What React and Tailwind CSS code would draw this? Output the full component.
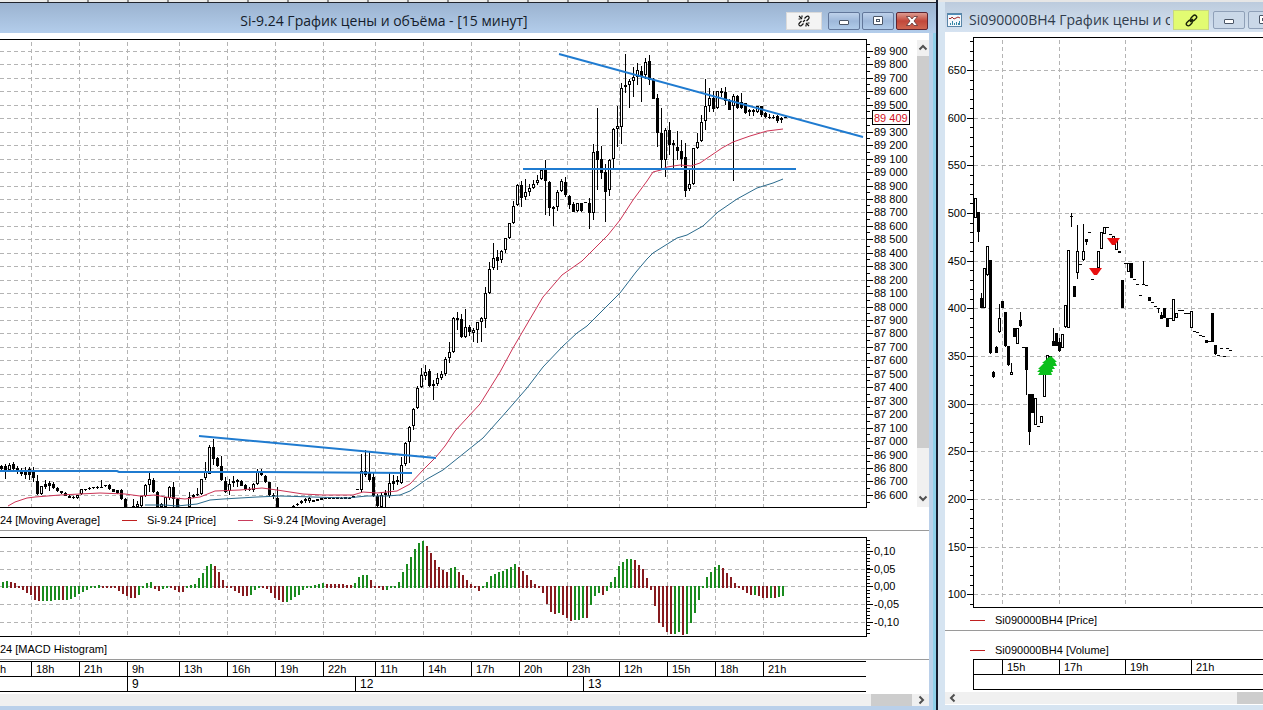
import React from 'react';

// Candles: [x, high, low, body top, body bottom, filled]
const PRICE_CANDLES = [
  [1, 465, 470, 466, 469, 1], [5, 464, 479, 466, 470, 1], [9, 463, 470, 465, 470, 0], [13, 462, 470, 464, 469, 1],
  [17, 466, 474, 468, 472, 1], [21, 468, 476, 471, 474, 1], [25, 467, 479, 470, 475, 1], [29, 467, 480, 469, 475, 1],
  [33, 467, 482, 470, 478, 1], [37, 475, 495, 481, 494, 1], [41, 486, 495, 486, 494, 0], [45, 480, 489, 484, 487, 1],
  [49, 481, 491, 483, 486, 1], [53, 482, 489, 484, 488, 1], [57, 487, 492, 488, 491, 1], [61, 491, 494, 491, 493, 1],
  [65, 492, 496, 493, 496, 1], [69, 495, 498, 496, 498, 1], [73, 496, 499, 497, 498, 1], [77, 495, 499, 495, 498, 0],
  [81, 489, 495, 489, 494, 0], [85, 489, 491, 489, 490, 1], [89, 487, 490, 488, 489, 1], [93, 487, 489, 487, 488, 1],
  [97, 486, 489, 487, 488, 1], [101, 480, 488, 487, 488, 1], [105, 485, 487, 485, 486, 1], [109, 484, 490, 485, 489, 1],
  [113, 489, 492, 489, 492, 1], [117, 490, 494, 490, 493, 1], [121, 489, 500, 490, 499, 1], [125, 498, 507, 499, 507, 1],
  [133, 499, 507, 506, 507, 0], [137, 501, 507, 504, 507, 0], [141, 496, 507, 496, 506, 0], [145, 484, 497, 485, 496, 0],
  [149, 473, 492, 479, 485, 0], [153, 478, 493, 480, 492, 1], [157, 491, 507, 492, 507, 1], [161, 503, 507, 504, 507, 0],
  [165, 497, 507, 497, 507, 0], [169, 486, 500, 487, 498, 0], [173, 482, 507, 487, 499, 1], [177, 498, 507, 499, 507, 1],
  [189, 492, 507, 497, 507, 0], [193, 494, 498, 495, 497, 1], [197, 488, 496, 494, 495, 1], [201, 479, 495, 479, 494, 0],
  [205, 462, 480, 472, 478, 0], [209, 445, 474, 447, 474, 0], [213, 439, 465, 447, 459, 1], [217, 457, 467, 458, 466, 1],
  [221, 456, 481, 466, 480, 1], [225, 477, 493, 481, 492, 1], [229, 479, 495, 484, 491, 0], [233, 476, 487, 481, 483, 0],
  [237, 479, 487, 480, 482, 0], [241, 480, 486, 481, 486, 1], [245, 484, 491, 485, 489, 1], [249, 487, 491, 489, 490, 1],
  [253, 483, 492, 484, 490, 0], [257, 469, 485, 471, 484, 0], [261, 469, 476, 471, 475, 1], [265, 475, 483, 476, 482, 1],
  [269, 482, 497, 482, 495, 1], [273, 493, 499, 495, 496, 1], [277, 487, 507, 498, 507, 1], [293, 505, 507, 506, 507, 1],
  [297, 503, 506, 504, 505, 1], [301, 500, 504, 501, 503, 0], [305, 498, 503, 499, 501, 1], [309, 497, 503, 498, 501, 0],
  [313, 500, 502, 500, 502, 1], [317, 499, 501, 499, 501, 1], [321, 498, 500, 498, 500, 1], [325, 497, 499, 498, 499, 1],
  [329, 497, 499, 497, 499, 1], [333, 497, 499, 498, 499, 1], [337, 497, 499, 497, 499, 1], [341, 497, 499, 498, 499, 1],
  [345, 497, 499, 497, 499, 1], [349, 497, 499, 498, 499, 1], [353, 496, 498, 496, 498, 1], [357, 489, 490, 489, 490, 1],
  [361, 454, 492, 471, 490, 0], [365, 450, 477, 471, 475, 1], [369, 452, 482, 472, 480, 1], [373, 473, 497, 477, 496, 1],
  [377, 494, 507, 496, 506, 1], [381, 493, 507, 495, 507, 0], [385, 490, 507, 493, 495, 1], [389, 473, 498, 483, 496, 0],
  [393, 475, 490, 481, 484, 1], [397, 476, 485, 480, 482, 1], [401, 457, 484, 465, 483, 0], [405, 442, 466, 443, 464, 0],
  [409, 426, 463, 427, 442, 0], [413, 408, 430, 409, 426, 0], [417, 386, 409, 388, 408, 0], [421, 368, 388, 375, 387, 0],
  [425, 365, 380, 372, 376, 0], [429, 369, 387, 371, 386, 1], [433, 380, 400, 384, 386, 1], [437, 373, 386, 378, 384, 0],
  [441, 371, 380, 374, 378, 0], [445, 357, 376, 359, 374, 0], [449, 342, 363, 352, 358, 0], [453, 317, 353, 318, 352, 0],
  [457, 312, 330, 318, 320, 1], [461, 314, 338, 319, 337, 1], [465, 309, 338, 327, 337, 0], [469, 325, 336, 327, 332, 1],
  [473, 328, 342, 330, 333, 0], [477, 322, 343, 322, 330, 0], [481, 317, 342, 318, 322, 0], [485, 287, 328, 293, 319, 0],
  [489, 262, 294, 269, 293, 0], [493, 243, 270, 258, 268, 0], [497, 250, 270, 257, 261, 1], [501, 250, 263, 251, 260, 0],
  [505, 238, 253, 238, 250, 0], [509, 223, 239, 223, 238, 0], [513, 201, 224, 206, 223, 0], [517, 184, 206, 185, 205, 0],
  [521, 181, 207, 185, 198, 1], [525, 179, 200, 192, 197, 0], [529, 184, 196, 188, 192, 0], [533, 180, 189, 184, 188, 0],
  [537, 175, 185, 180, 183, 0], [541, 168, 180, 170, 179, 0], [545, 160, 215, 168, 181, 1], [549, 181, 216, 182, 208, 1],
  [553, 206, 226, 207, 209, 1], [557, 190, 211, 192, 207, 0], [561, 179, 192, 181, 191, 0], [565, 177, 197, 182, 195, 1],
  [569, 195, 209, 196, 205, 1], [573, 202, 212, 204, 212, 1], [577, 203, 212, 203, 211, 0], [581, 203, 212, 203, 211, 1],
  [585, 202, 203, 202, 203, 1], [589, 198, 229, 203, 213, 1], [593, 144, 220, 152, 213, 0], [597, 108, 190, 151, 160, 1],
  [601, 146, 179, 159, 173, 1], [605, 164, 222, 172, 192, 1], [609, 159, 196, 160, 190, 0], [613, 128, 168, 129, 159, 0],
  [617, 106, 147, 126, 129, 0], [621, 83, 144, 88, 127, 0], [625, 54, 93, 85, 87, 0], [629, 79, 108, 81, 85, 0],
  [633, 67, 97, 77, 81, 0], [637, 63, 85, 70, 77, 0], [641, 66, 102, 71, 76, 1], [645, 58, 79, 62, 75, 0],
  [649, 55, 85, 61, 80, 1], [653, 78, 99, 79, 99, 1], [657, 94, 147, 98, 133, 1], [661, 108, 170, 133, 160, 1],
  [665, 128, 177, 130, 160, 0], [669, 122, 155, 130, 145, 1], [673, 140, 168, 143, 145, 1], [677, 131, 160, 147, 151, 1],
  [681, 140, 167, 151, 159, 1], [685, 143, 197, 157, 191, 1], [689, 168, 191, 184, 189, 0], [693, 148, 185, 148, 184, 0],
  [697, 133, 149, 142, 148, 0], [701, 115, 142, 122, 141, 0], [705, 79, 130, 106, 121, 0], [709, 88, 112, 98, 106, 0],
  [713, 91, 112, 98, 109, 1], [717, 91, 109, 91, 108, 0], [721, 88, 97, 91, 93, 1], [725, 87, 105, 92, 101, 1],
  [729, 99, 110, 101, 110, 1], [733, 94, 181, 96, 106, 0], [737, 95, 109, 96, 108, 1], [741, 93, 109, 102, 108, 1],
  [745, 103, 114, 103, 113, 1], [749, 109, 116, 110, 112, 0], [753, 109, 116, 110, 112, 1], [757, 106, 113, 106, 112, 0],
  [761, 106, 117, 106, 115, 1], [765, 112, 118, 113, 117, 1], [769, 114, 119, 117, 118, 1], [773, 115, 119, 117, 118, 1],
  [777, 115, 123, 116, 121, 1], [781, 117, 123, 118, 120, 0], [785, 116, 118, 117, 118, 1],
];

const OPTION_CANDLES = [
  [975, 198, 218, 198, 218, 0], [978, 212, 242, 212, 232, 1], [981, 293, 308, 298, 308, 1], [984, 268, 308, 268, 308, 0],
  [987, 246, 276, 246, 275, 0], [990, 260, 354, 260, 353, 1], [993, 371, 378, 372, 377, 1], [996, 346, 353, 347, 353, 1],
  [999, 304, 333, 318, 332, 0], [1002, 301, 308, 301, 308, 1], [1005, 312, 347, 312, 346, 1], [1008, 346, 366, 346, 365, 1],
  [1011, 363, 375, 372, 375, 0], [1014, 328, 337, 328, 337, 1], [1017, 328, 344, 328, 344, 0], [1020, 312, 327, 320, 326, 1],
  [1026, 347, 395, 347, 370, 1], [1029, 394, 445, 394, 432, 1], [1032, 394, 413, 394, 413, 1], [1035, 398, 425, 398, 425, 0],
  [1041, 416, 423, 416, 423, 0], [1044, 372, 397, 372, 397, 0], [1047, 355, 375, 355, 375, 0], [1053, 328, 346, 341, 346, 1],
  [1056, 333, 346, 333, 346, 1], [1059, 338, 352, 342, 351, 1], [1062, 334, 348, 334, 348, 0], [1065, 305, 328, 305, 327, 0],
  [1068, 250, 328, 250, 328, 0], [1071, 213, 227, 216, 217, 1], [1074, 286, 297, 286, 297, 1], [1077, 225, 279, 251, 273, 0],
  [1083, 224, 261, 251, 260, 0], [1086, 239, 245, 239, 242, 1], [1098, 251, 268, 251, 268, 0], [1101, 232, 249, 232, 249, 0],
  [1104, 227, 234, 227, 234, 0], [1113, 236, 240, 236, 240, 0], [1116, 240, 250, 240, 250, 0], [1119, 251, 253, 251, 253, 1],
  [1122, 280, 308, 280, 308, 1], [1128, 263, 272, 263, 272, 0], [1131, 263, 278, 263, 278, 1], [1143, 261, 285, 284, 285, 1],
  [1149, 297, 301, 297, 301, 1], [1158, 308, 313, 308, 309, 1], [1161, 312, 319, 315, 319, 1], [1164, 308, 318, 308, 318, 1],
  [1167, 318, 327, 318, 327, 1], [1173, 299, 321, 299, 321, 0], [1176, 313, 318, 313, 318, 0], [1191, 311, 328, 311, 328, 0],
  [1206, 340, 343, 340, 343, 1], [1212, 313, 342, 313, 342, 1], [1215, 345, 355, 345, 354, 1],
];

// Flat trades, drawn as a short dash
const OPTION_DASHES = [
  [1023, 347], [1038, 426], [1050, 356], [1080, 264], [1089, 232], [1092, 279], [1107, 227], [1110, 234], [1125, 263],
  [1134, 279], [1137, 284], [1140, 295], [1146, 285], [1152, 302], [1155, 306], [1170, 318], [1179, 310], [1182, 310],
  [1185, 313], [1188, 313], [1194, 331], [1197, 332], [1200, 335], [1203, 336], [1209, 341], [1218, 355], [1221, 348],
  [1224, 356], [1227, 348], [1230, 350],
];

const FAST_MA =
  '8,506 15,502 27,498 35,497 60,495 80,494 100,493 125,494 140,496 155,495 165,497 185,499 200,497 215,491 240,490 262,488 277,490 303,494 323,495 353,495 363,492 377,493 397,491 410,484 423,470 436,457 445,446 455,431 480,404 500,372 513,348 530,319 543,297 562,275 582,261 600,243 608,235 620,220 633,200 647,181 653,172 661,170 667,167 680,165 691,166 700,163 722,148 733,142 750,136 767,131 783,129';
const SLOW_MA =
  '145,505 165,505 177,506 197,504 210,500 223,499 257,497 280,496 313,497 347,498 367,496 387,496 400,495 410,491 427,479 443,470 463,454 483,438 507,411 527,388 543,367 563,346 577,333 587,326 600,313 620,293 636,272 647,259 653,253 677,238 687,235 703,226 718,212 737,199 757,188 773,183 783,179';

// Bar height above zero and its colour (g: rising, r: falling), one bar each 4px
const MACD =
  '5g 6g 5r 4r 1r -3r -6r -8r -13r -14r -14g -14g -14g -13g -13g -13r -13g -12g -10g -7g -5g -3g -1g 1g 2g 1r 1r 1r -1r -4r -7r -9r -11r -11r -8g -1g 4g 5g -2r -4r -2g 1g 1r -3r -5r -5r -1g 2g 3g 9g 14g 21g 23g 21r 15r 7r 1r -1r -4r -6r -9r -9r -8g -3g -1g -1r -2r -6r -11r -13r -15r -15g -13g -10g -8g -3g -1g 1g 2g 3g 4g 3r 3r 3r 3r 3r 2r 2r 4g 10g 12g 12g 7r 1r -1r -3r -3g -1g 1g 5g 15g 23g 30g 38g 44g 46g 41r 34r 27r 20r 17r 15r 19g 20g 15r 12r 7r 3r -1r -4r -1g 5g 11g 13g 15g 16g 18g 20g 23g 20r 16r 12r 7r 3r 1r -6r -17r -25r -27r -26g -28r -31r -34r -33g -33g -31g -31r -18g -9g -6g -8r -4g 5g 10g 21g 25g 28g 28g 27r 22r 18r 9r -3r -19r -36r -40r -45r -47r -47g -45g -48r -47g -36g -26g -13g -1g 10g 15g 20g 22g 19r 14r 10r 4r 1r -3r -6r -8r -8g -9r -11r -11r -11g -11r -10g -9g'
    .split(' ');

const GRID_X = [31, 79, 127, 179, 227, 275, 323, 375, 423, 471, 519, 567, 619, 667, 715, 763];
const OPTION_GRID_X = [1002, 1059, 1125, 1191];

const priceY = (price) => Math.round(51 + ((89900 - price) / 100) * 13.45);
const optionY = (value) => Math.round(70 + (650 - value) * 0.9535);
const formatPrice = (price) => `${Math.floor(price / 1000)} ${String(price % 1000).padStart(3, '0')}`;

const PRICES = Array.from({ length: 34 }, (_, i) => 89900 - i * 100);
const OPTION_LEVELS = Array.from({ length: 12 }, (_, i) => 650 - i * 50);
const MACD_LEVELS = [
  ['0,10', 551],
  ['0,05', 569],
  ['0,00', 586],
  ['-0,05', 604],
  ['-0,10', 622],
];

const Candles = ({ data, wide = 3 }) => (
  <g shapeRendering="crispEdges">
    {data.map(([x, high, low, top, bottom, filled]) => (
      <g key={x}>
        <rect x={x} y={high} width="1" height={low - high} fill="#000" />
        {filled ? (
          <rect x={x - 1} y={top} width={wide} height={Math.max(bottom - top, 1)} fill="#000" />
        ) : (
          <rect x={x - 0.5} y={top + 0.5} width="2" height={Math.max(bottom - top - 1, 1)} fill="#fff" stroke="#000" />
        )}
      </g>
    ))}
  </g>
);

const Grid = ({ xs, ys, left, right, top, bottom }) => (
  <g stroke="#b4b4b4" strokeDasharray="4 3" shapeRendering="crispEdges">
    {ys.map((y) => (
      <line key={`h${y}`} x1={left} x2={right} y1={y + 0.5} y2={y + 0.5} />
    ))}
    {xs.map((x) => (
      <line key={`v${x}`} x1={x + 0.5} x2={x + 0.5} y1={top} y2={bottom} />
    ))}
  </g>
);

const PriceChart = () => (
  <svg className="block shrink-0" width="917" height="478" viewBox="0 33 917 478" role="img" aria-label="Si-9.24">
    <Grid xs={GRID_X} ys={PRICES.map(priceY)} left={0} right={866} top={42} bottom={507} />
    <Candles data={PRICE_CANDLES} />
    <polyline points={SLOW_MA} fill="none" stroke="#2a6a8c" />
    <polyline points={FAST_MA} fill="none" stroke="#cc3355" />
    <g stroke="#1f7bd0" strokeWidth="2" fill="none">
      <line x1="559" y1="54" x2="863" y2="137" />
      <line x1="523" y1="169" x2="796" y2="169" />
      <polyline points="0,471 117,471 119,472 260,472 412,473" />
      <line x1="199" y1="436" x2="436" y2="458" />
    </g>
    <g stroke="#000" shapeRendering="crispEdges">
      <path d="M0 39.5H866.5V507.5H0" fill="none" />
      {PRICES.map((p) => (
        <g key={p}>
          <line x1="867" x2="873" y1={priceY(p) + 0.5} y2={priceY(p) + 0.5} />
          <line x1="867" x2="870" y1={priceY(p) - 6.5} y2={priceY(p) - 6.5} />
        </g>
      ))}
      <line x1="867" x2="870" y1="502.5" y2="502.5" />
    </g>
    <g fontFamily="Liberation Sans, Arial, sans-serif" fontSize="11">
      {PRICES.filter((p) => p !== 89400).map((p) => (
        <text key={p} x="874" y={priceY(p) + 4}>{formatPrice(p)}</text>
      ))}
      <rect x="872.5" y="110.5" width="37" height="14" fill="#fff" stroke="#000" />
      <text x="874" y="122" fill="#d01020">89 409</text>
    </g>
  </svg>
);

const MacdChart = () => (
  <svg className="block shrink-0" width="929" height="110" viewBox="0 531 929 110" role="img" aria-label="MACD">
    <Grid xs={GRID_X} ys={MACD_LEVELS.map((l) => l[1])} left={0} right={866} top={540} bottom={636} />
    <g shapeRendering="crispEdges">
      {MACD.map((bar, i) => {
        const value = parseInt(bar, 10);
        return (
          <rect
            key={i}
            x={2 + i * 4}
            y={value > 0 ? 587 - value : 586}
            width="2"
            height={Math.abs(value) + 1}
            fill={bar.endsWith('g') ? '#1a8a1e' : '#861a1e'}
          />
        );
      })}
    </g>
    <g stroke="#000" shapeRendering="crispEdges">
      <path d="M0 537.5H866.5V636.5H0" fill="none" />
      {Array.from({ length: 27 }, (_, i) => {
        const y = Math.round(540 + i * 3.56) + 0.5;
        return <line key={i} x1="867" x2="870" y1={y} y2={y} />;
      })}
      {MACD_LEVELS.map(([label, y]) => (
        <line key={label} x1="867" x2="873" y1={y + 0.5} y2={y + 0.5} />
      ))}
    </g>
    <g fontFamily="Liberation Sans, Arial, sans-serif" fontSize="11">
      {MACD_LEVELS.map(([label, y]) => (
        <text key={label} x="874" y={y + 4}>{label}</text>
      ))}
    </g>
  </svg>
);

const OptionChart = () => (
  <svg className="block shrink-0" width="1000" height="579" viewBox="945 32 1000 579" role="img" aria-label="Si090000BH4">
    <Grid xs={OPTION_GRID_X} ys={OPTION_LEVELS.map(optionY)} left={974} right={1945} top={40} bottom={607} />
    <Candles data={OPTION_CANDLES} />
    <g fill="#000" shapeRendering="crispEdges">
      {OPTION_DASHES.map(([x, y]) => (
        <rect key={x} x={x - 1} y={y} width="3" height="1" />
      ))}
    </g>
    <g fill="#e81010">
      <path d="M1089 268H1102L1097 275H1094Z" />
      <path d="M1107 238H1120L1115 245H1112Z" />
    </g>
    <path
      d="M1051 356L1057 362H1055L1057 366H1053L1055 369H1052L1053 372H1051L1052 375H1038L1040 372H1037L1040 369H1038L1044 363H1042L1047 359H1046Z"
      fill="#0cc01c"
    />
    <g stroke="#000" shapeRendering="crispEdges">
      <path d="M1945 37.5H973.5V607.5H1945" fill="none" />
      {Array.from({ length: 60 }, (_, i) => {
        const y = optionY(680 - i * 10) + 0.5;
        return <line key={i} x1="970" x2="973" y1={y} y2={y} />;
      })}
      {OPTION_LEVELS.map((v) => (
        <line key={v} x1="967" x2="973" y1={optionY(v) + 0.5} y2={optionY(v) + 0.5} />
      ))}
    </g>
    <g fontFamily="Liberation Sans, Arial, sans-serif" fontSize="11" textAnchor="end">
      {OPTION_LEVELS.map((v) => (
        <text key={v} x="966" y={optionY(v) + 4}>{v}</text>
      ))}
    </g>
  </svg>
);

const Legend = ({ items }) => (
  <ul className="flex gap-[22px] whitespace-nowrap">
    {items.map((item, i) => (
      <li key={i} className="flex shrink-0 gap-2.5">
        {item.color && <span className={`mt-2 h-px w-[15px] ${item.color}`} />}
        {item.label}
      </li>
    ))}
  </ul>
);

const AxisCell = ({ width, children }) => (
  <div className={`h-full shrink-0 border-r border-black pl-1 leading-[14px] ${width}`}>{children}</div>
);

const ICONS = {
  up: 'M1.5 6.5L5 3L8.5 6.5',
  down: 'M1.5 3.5L5 7L8.5 3.5',
  left: 'M6.5 1.5L3 5L6.5 8.5',
  right: 'M3.5 1.5L7 5L3.5 8.5',
};

const ScrollArrow = ({ direction }) => (
  <button type="button" aria-label={`Scroll ${direction}`} className="flex h-3 w-3 shrink-0 items-center justify-center">
    <svg className="h-[10px] w-[10px]" viewBox="0 0 10 10" fill="none" stroke="#505050" strokeWidth="2">
      <path d={ICONS[direction]} />
    </svg>
  </button>
);

const WindowButton = ({ kind, className }) => (
  <button
    type="button"
    aria-label={kind}
    className={`flex h-[18px] w-8 shrink-0 items-center justify-center rounded-xs border ${className}`}
  >
    <svg width="14" height="12" viewBox="0 0 14 12" fill="#fff" stroke="#4a5566">
      {kind === 'Minimize' && <rect x="2.5" y="5.5" width="9" height="4" rx="0.5" />}
      {kind === 'Maximize' && (
        <>
          <rect x="2.5" y="1.5" width="9" height="8" rx="0.5" />
          <rect x="5.5" y="4.5" width="3" height="2" />
        </>
      )}
      {kind === 'Close' && (
        <path d="M1.5 1.5H5L7 4L9 1.5H12.5L9 6L12.5 10.5H9L7 8L5 10.5H1.5L5 6Z" stroke="#5e3434" strokeWidth="0.8" />
      )}
    </svg>
  </button>
);

const MainWindow = () => (
  <section className="flex min-w-0 flex-col border-r-2 border-[#141c30] bg-[#bad0ea] shadow-[inset_-3px_0_#8ecfea]">
    <div className="flex h-0.5 shrink-0 gap-[38px] overflow-hidden bg-[#ebebe9] pl-[47px]">
      {Array.from({ length: 20 }, (_, i) => (
        <span key={i} className="h-full w-0.5 shrink-0 bg-[#8c8c8c]" />
      ))}
    </div>
    <header className="flex h-[31px] shrink-0 items-center gap-[2px] border-t border-[#20242c] bg-linear-to-b from-[#9bb3d0] to-[#b3cdeb] pt-1.5 pr-2">
      <h1 className="min-w-0 flex-1 truncate pr-4 text-center font-['Open_Sans','Noto_Sans',sans-serif] text-sm text-[#151d2c]">
        Si-9.24 График цены и объёма - [15 минут]
      </h1>
      <button
        type="button"
        aria-label="Unlink window"
        className="mr-1 flex h-[18px] w-9 shrink-0 items-center justify-center border border-[#dadada] bg-[#f4f4f4]"
      >
        <svg width="14" height="14" viewBox="0 0 14 14" fill="none" stroke="#111" strokeWidth="1.2">
          <path d="M7.5 4.5L9.5 2.5Q11 1.5 12 3Q12.5 4 11.5 5L9.5 7M6.5 9.5L4.5 11.5Q3 12.5 2 11Q1.5 10 2.5 9L4.5 7" />
          <path d="M5 5L2 2M5 1.5V3.5M1.5 5H3.5M9 9L12 12M9 10.5V12.5M10.5 9H12.5M6 8L8 6" />
        </svg>
      </button>
      <WindowButton kind="Minimize" className="border-[#62779a] bg-linear-to-b from-[#bed1ea] via-[#9eb8da] to-[#b0cbe9]" />
      <WindowButton kind="Maximize" className="border-[#62779a] bg-linear-to-b from-[#bed1ea] via-[#9eb8da] to-[#b0cbe9]" />
      <WindowButton kind="Close" className="border-[#5e2430] bg-linear-to-b from-[#dc9a90] via-[#c2473a] to-[#cf6650]" />
    </header>

    <div className="mr-[7px] mb-1 flex-1 overflow-hidden bg-white">
      <div className="flex">
        <div className="flex min-w-0 flex-1 justify-end overflow-hidden">
          <PriceChart />
        </div>
        <div className="mt-[7px] mb-1 flex w-3 shrink-0 flex-col bg-[#f0f0f0]">
          <div className="flex h-4 items-center">
            <ScrollArrow direction="up" />
          </div>
          <div className="h-[392px] bg-[#cdcdcd]" />
          <div className="mt-auto flex h-[18px] items-center">
            <ScrollArrow direction="down" />
          </div>
        </div>
      </div>
      <div className="h-[19px] pt-px">
        <Legend
          items={[
            { label: '24 [Moving Average]' },
            { label: 'Si-9.24 [Price]', color: 'bg-[#c02020]' },
            { label: 'Si-9.24 [Moving Average]', color: 'bg-[#c83c5c]' },
          ]}
        />
      </div>

      <div className="flex justify-end overflow-hidden border-t border-[#9a9a9a]">
        <MacdChart />
      </div>
      <div className="h-[18px]">
        <Legend items={[{ label: '24 [MACD Histogram]' }]} />
      </div>

      <div className="flex justify-end overflow-hidden border-t border-[#9a9a9a] pt-px pr-[63px]">
        <div className="w-[866px] shrink-0">
          <div className="flex h-4 border-y border-black">
            <div className="h-full w-8 shrink-0 border-r border-black leading-[14px]">h</div>
            <AxisCell width="w-12">18h</AxisCell>
            <AxisCell width="w-12">21h</AxisCell>
            <AxisCell width="w-[52px]">9h</AxisCell>
            <AxisCell width="w-12">13h</AxisCell>
            <AxisCell width="w-12">16h</AxisCell>
            <AxisCell width="w-12">19h</AxisCell>
            <AxisCell width="w-[52px]">22h</AxisCell>
            <AxisCell width="w-12">11h</AxisCell>
            <AxisCell width="w-12">14h</AxisCell>
            <AxisCell width="w-12">17h</AxisCell>
            <AxisCell width="w-12">20h</AxisCell>
            <AxisCell width="w-[52px]">23h</AxisCell>
            <AxisCell width="w-12">12h</AxisCell>
            <AxisCell width="w-12">15h</AxisCell>
            <AxisCell width="w-12">18h</AxisCell>
            <div className="pl-1 leading-[14px]">21h</div>
          </div>
          <div className="flex h-[15px] border-b border-black text-xs">
            <AxisCell width="w-32" />
            <AxisCell width="w-[228px]">9</AxisCell>
            <AxisCell width="w-[228px]">12</AxisCell>
            <div className="pl-1 leading-[14px]">13</div>
          </div>
        </div>
      </div>
      <div className="mt-0.5 flex h-3 items-center justify-end gap-[3px] bg-[#f0f0f0] pr-0.5">
        <div className="h-full w-[41px] bg-[#cdcdcd]" />
        <ScrollArrow direction="right" />
      </div>
    </div>
  </section>
);

const OptionWindow = () => (
  <section className="flex min-w-0 flex-col overflow-hidden border-t-2 border-[#e6e6e6] bg-[#d6e4f1] pl-[7px]">
    <header className="flex h-[30px] w-[394px] shrink-0 items-center gap-[3px] bg-linear-to-b from-[#bccbdd] to-[#d6e3f1] pt-1.5 pl-0.5">
      <svg className="mr-1 shrink-0" width="15" height="14" viewBox="0 0 15 14">
        <rect x="0.5" y="0.5" width="14" height="13" fill="#f4f8fc" stroke="#5a86a8" />
        <path d="M1 1.5H14" stroke="#4c8cb8" />
        <path d="M2 5.5H4L5 4L7 6L9 5L11 4L13 5" fill="none" stroke="#a02828" />
        <path d="M3.5 12V10M5.5 12V8M7.5 12V10M9.5 12V9M11.5 12V10M12.5 12V8" stroke="#3888a8" />
      </svg>
      <h2 className="w-[201px] shrink-0 overflow-hidden font-['Open_Sans','Noto_Sans',sans-serif] text-sm whitespace-nowrap text-[#303c4c]">
        Si090000BH4 График цены и объёма
      </h2>
      <button
        type="button"
        aria-label="Link window"
        className="mr-px flex h-5 w-9 shrink-0 items-center justify-center border border-[#c8d880] bg-[#e2fb72]"
      >
        <svg width="13" height="13" viewBox="0 0 13 13" fill="none" stroke="#182008" strokeWidth="1.4">
          <rect x="5.5" y="2" width="6.5" height="4" rx="2" transform="rotate(-45 8.75 4)" />
          <rect x="1" y="7" width="6.5" height="4" rx="2" transform="rotate(-45 4.25 9)" />
          <path d="M5 8L8 5" />
        </svg>
      </button>
      <WindowButton kind="Minimize" className="border-[#8fa0b8] bg-[#cad8e8]" />
      <WindowButton kind="Maximize" className="border-[#8fa0b8] bg-[#cad8e8]" />
      <WindowButton kind="Close" className="border-[#8fa0b8] bg-[#cad8e8]" />
    </header>

    <div className="mb-[5px] flex-1 overflow-hidden bg-white">
      <OptionChart />
      <div className="h-[19px] pt-px pl-[25px]">
        <Legend items={[{ label: 'Si090000BH4 [Price]', color: 'bg-[#c02020]' }]} />
      </div>
      <div className="border-t border-[#9a9a9a] pt-[11px] pb-px pl-[25px]">
        <Legend items={[{ label: 'Si090000BH4 [Volume]', color: 'bg-[#c02020]' }]} />
      </div>
      <div className="ml-7 border-l border-black">
        <div className="flex h-4 border-y border-black">
          <AxisCell width="w-[29px]" />
          <AxisCell width="w-[57px]">15h</AxisCell>
          <AxisCell width="w-[66px]">17h</AxisCell>
          <AxisCell width="w-[66px]">19h</AxisCell>
          <div className="pl-1 leading-[14px]">21h</div>
        </div>
        <div className="h-[15px] border-b border-black" />
      </div>
      <div className="mt-0.5 flex h-3 items-center justify-between bg-[#f0f0f0] pl-0.5">
        <ScrollArrow direction="left" />
        <div className="h-full w-[26px] bg-[#cdcdcd]" />
      </div>
    </div>
  </section>
);

const App = () => (
  <main className="grid min-h-screen grid-cols-[minmax(0,938fr)_minmax(0,325fr)] overflow-hidden bg-white font-['Liberation_Sans',Arial,sans-serif] text-[11px] leading-4 text-black">
    <MainWindow />
    <OptionWindow />
  </main>
);

export default App;
